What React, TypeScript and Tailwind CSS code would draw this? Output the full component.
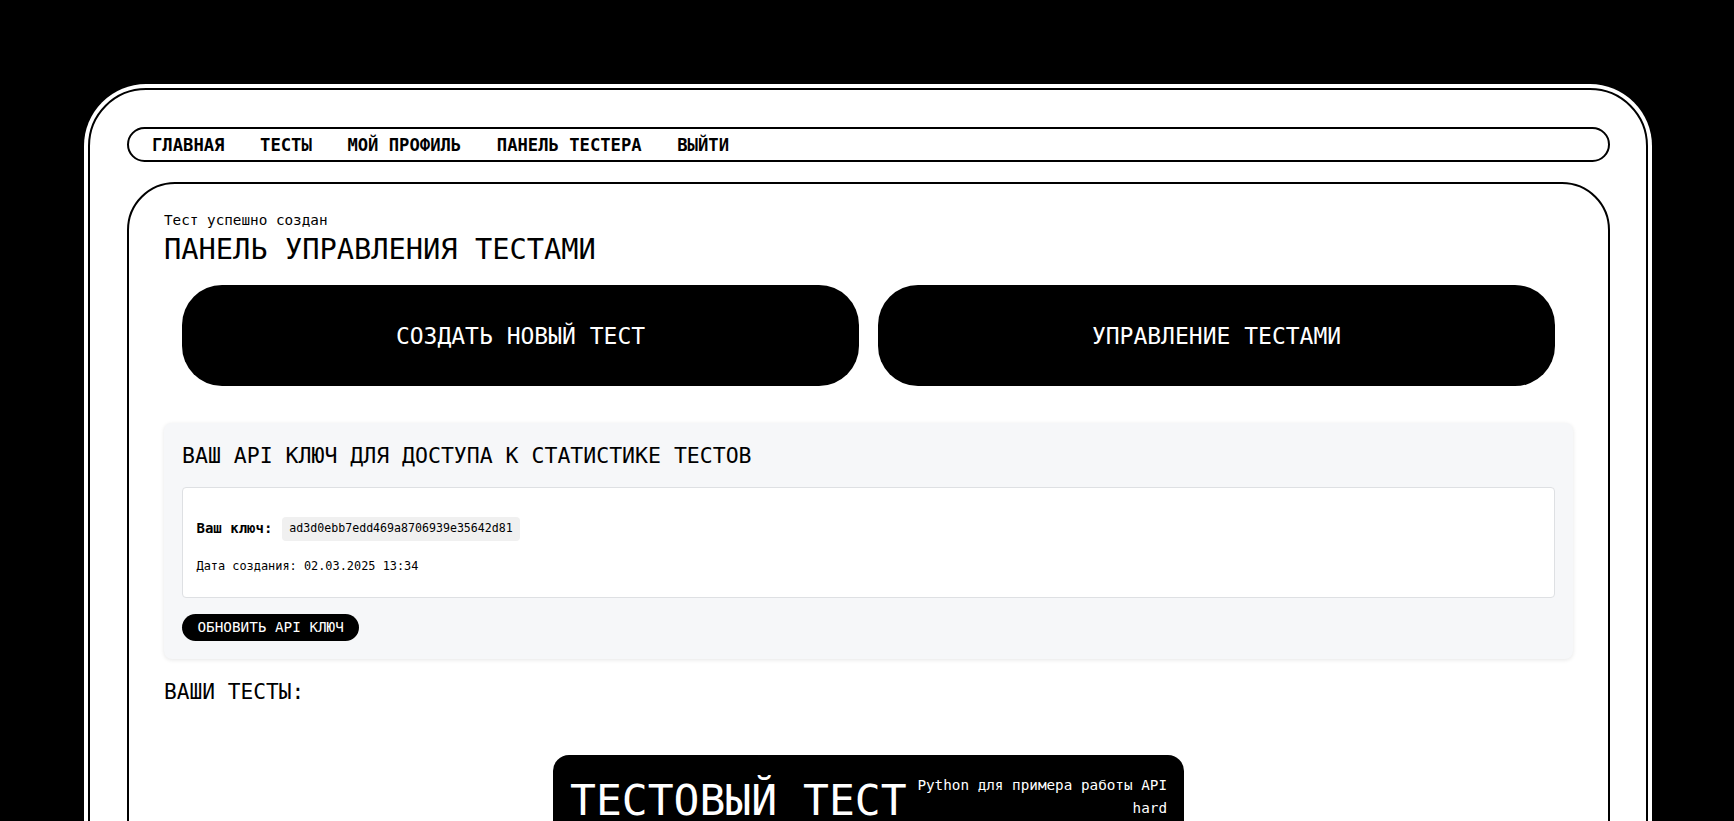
export default function App() {
  const navItems = ['ГЛАВНАЯ', 'ТЕСТЫ', 'МОЙ ПРОФИЛЬ', 'ПАНЕЛЬ ТЕСТЕРА', 'ВЫЙТИ']

  return (
    <div className="min-h-screen bg-black pt-[84px] pb-[84px] font-['DejaVu_Sans_Mono',monospace] text-black">
      <div className="ml-[84px] w-[1568px] rounded-[62px] bg-white p-[4px]">
        <div className="rounded-[58px] border-2 border-black pl-[37px] pr-[36px] pt-[36.5px] pb-[40px]">
          {/* nav */}
          <nav className="flex h-[35px] items-center gap-[35.6px] rounded-full border-2 border-black px-[23px] pt-[3.5px] text-[17.2px] font-bold">
            {navItems.map((item) => (
              <a key={item} href="#" className="leading-none">
                {item}
              </a>
            ))}
          </nav>

          {/* main card */}
          <div className="mt-[20px] rounded-[48px] border-2 border-black px-[35px] pt-[26px] pb-[60px]">
            <p className="text-[14.3px] leading-[21.5px]">Тест успешно создан</p>
            <h1 className="text-[28.7px] leading-[36px] font-normal">ПАНЕЛЬ УПРАВЛЕНИЯ ТЕСТАМИ</h1>

            <div className="mt-[17.5px] flex gap-[19px] px-[18px]">
              <button className="flex h-[101px] flex-1 items-center justify-center rounded-[40px] bg-black pt-[2px] text-[23px] text-white">
                СОЗДАТЬ НОВЫЙ ТЕСТ
              </button>
              <button className="flex h-[101px] flex-1 items-center justify-center rounded-[40px] bg-black pt-[2px] text-[23px] text-white">
                УПРАВЛЕНИЕ ТЕСТАМИ
              </button>
            </div>

            {/* api key */}
            <div className="mt-[37.5px] rounded-lg bg-[#f6f7f9] px-[18px] pt-[19px] pb-[17.5px] shadow-[0_1px_4px_rgba(0,0,0,0.1)]">
              <h2 className="mb-[16.5px] text-[21.5px] leading-[28px] font-normal">
                ВАШ API КЛЮЧ ДЛЯ ДОСТУПА К СТАТИСТИКЕ ТЕСТОВ
              </h2>
              <div className="rounded border border-[#dee0e3] bg-white px-[13.5px] pt-[29.5px] pb-[22.5px]">
                <div className="flex items-center gap-[10px]">
                  <span className="text-[14px] font-bold">Ваш ключ:</span>
                  <code className="flex h-[23.5px] items-center rounded bg-[#f0f0f0] px-[7px] font-['DejaVu_Sans_Mono',monospace] text-[11.6px]">
                    ad3d0ebb7edd469a8706939e35642d81
                  </code>
                </div>
                <p className="mt-[16px] text-[11.9px] leading-[18px]">Дата создания: 02.03.2025 13:34</p>
              </div>
              <button className="mt-[15.5px] inline-flex h-[27.5px] items-center rounded-full bg-black px-[15.5px] pt-[1px] text-[14.3px] text-white">
                ОБНОВИТЬ API КЛЮЧ
              </button>
            </div>

            <h2 className="mt-[19px] text-[21.2px] leading-[28px] font-normal">ВАШИ ТЕСТЫ:</h2>

            {/* test card */}
            <div className="mx-auto mt-[49px] w-[631px] rounded-[16px] bg-black p-[17px] text-white">
              <div className="flex items-start justify-between">
                <h3 className="text-[43px] leading-[56px] font-normal">ТЕСТОВЫЙ ТЕСТ</h3>
                <div className="pt-[2px] text-right text-[14.3px] leading-[23px]">
                  <div>Python для примера работы API</div>
                  <div>hard</div>
                </div>
              </div>
              <div className="mt-[20px] flex gap-[12px]">
                <button className="rounded-full bg-white px-[16px] py-[4px] text-[14px] text-black">ОТКРЫТЬ</button>
                <button className="rounded-full bg-white px-[16px] py-[4px] text-[14px] text-black">СТАТИСТИКА</button>
              </div>
            </div>
          </div>
        </div>
      </div>
    </div>
  )
}
